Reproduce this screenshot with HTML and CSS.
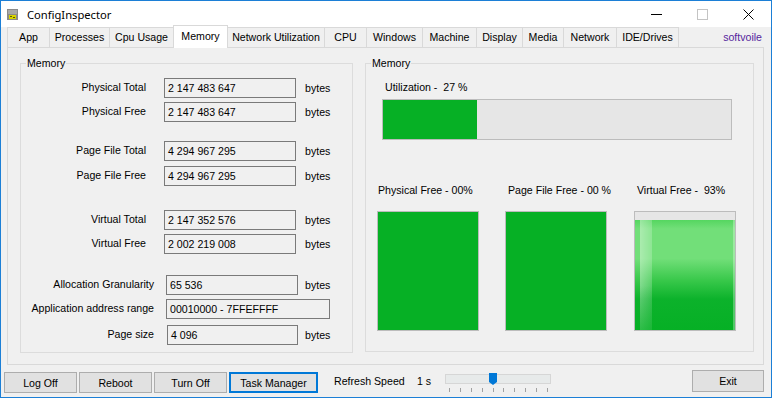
FILE: index.html
```html
<!DOCTYPE html>
<html lang="en">
<head>
    <meta charset="UTF-8">
    <title>ConfigInspector</title>
    <link rel="stylesheet" href="styles.css">
</head>
<body>
    <div class="window">
        <div class="titlebar">
            <svg class="app-icon" width="12" height="12" viewBox="0 0 12 12">
                <rect x="0" y="0" width="11" height="11" fill="#8a8a8a"/>
                <rect x="1" y="1" width="9" height="4" fill="#a8a8a8"/>
                <rect x="2" y="6" width="7" height="4" fill="#d8d400"/>
                <rect x="3" y="7" width="2" height="1" fill="#5a5a00"/>
                <rect x="6" y="8" width="2" height="1" fill="#5a5a00"/>
            </svg>
            <span class="title">ConfigInspector</span>
            <div class="controls">
                <span class="ctl"><svg width="11" height="11" viewBox="0 0 11 11"><line x1="0" y1="5.5" x2="11" y2="5.5" stroke="#000" stroke-width="1"/></svg></span>
                <span class="ctl"><svg width="11" height="11" viewBox="0 0 11 11"><rect x="0.5" y="0.5" width="10" height="10" fill="none" stroke="#c4c4c4" stroke-width="1"/></svg></span>
                <span class="ctl"><svg width="11" height="11" viewBox="0 0 11 11"><path d="M0.5 0.5 L10.5 10.5 M10.5 0.5 L0.5 10.5" stroke="#000" stroke-width="1"/></svg></span>
            </div>
        </div>

        <div class="tabstrip">
            <div class="tab" style="width:43px">App</div>
            <div class="tab" style="width:61px">Processes</div>
            <div class="tab" style="width:65px">Cpu Usage</div>
            <div class="tab selected" style="width:55px">Memory</div>
            <div class="tab" style="width:98px">Network Utilization</div>
            <div class="tab" style="width:43px">CPU</div>
            <div class="tab" style="width:57px">Windows</div>
            <div class="tab" style="width:55px">Machine</div>
            <div class="tab" style="width:47px">Display</div>
            <div class="tab" style="width:42px">Media</div>
            <div class="tab" style="width:54px">Network</div>
            <div class="tab" style="width:63px">IDE/Drives</div>
            <span class="brand">softvoile</span>
        </div>

        <div class="page">
            <fieldset class="group group-left">
                <legend>Memory</legend>

                <div class="row row-a" style="margin-top:8px">
                    <span class="label">Physical Total</span>
                    <span class="field">2 147 483 647</span>
                    <span class="unit">bytes</span>
                </div>
                <div class="row row-a" style="margin-top:4px">
                    <span class="label">Physical Free</span>
                    <span class="field">2 147 483 647</span>
                    <span class="unit">bytes</span>
                </div>

                <div class="row row-a" style="margin-top:19px">
                    <span class="label">Page File Total</span>
                    <span class="field">4 294 967 295</span>
                    <span class="unit">bytes</span>
                </div>
                <div class="row row-a" style="margin-top:5px">
                    <span class="label">Page File Free</span>
                    <span class="field">4 294 967 295</span>
                    <span class="unit">bytes</span>
                </div>

                <div class="row row-a" style="margin-top:24px">
                    <span class="label">Virtual Total</span>
                    <span class="field">2 147 352 576</span>
                    <span class="unit">bytes</span>
                </div>
                <div class="row row-a" style="margin-top:4px">
                    <span class="label">Virtual Free</span>
                    <span class="field">2 002 219 008</span>
                    <span class="unit">bytes</span>
                </div>

                <div class="row row-b" style="margin-top:21px">
                    <span class="label">Allocation Granularity</span>
                    <span class="field">65 536</span>
                    <span class="unit">bytes</span>
                </div>
                <div class="row row-b" style="margin-top:4px">
                    <span class="label">Application address range</span>
                    <span class="field field-wide">00010000 - 7FFEFFFF</span>
                </div>
                <div class="row row-b" style="margin-top:6px">
                    <span class="label">Page size</span>
                    <span class="field field-page">4 096</span>
                    <span class="unit">bytes</span>
                </div>
            </fieldset>

            <fieldset class="group group-right">
                <legend>Memory</legend>
                <div class="util-label">Utilization -&nbsp;&nbsp;27 %</div>
                <div class="hbar"><div class="hbar-fill" style="width:27%"></div></div>

                <div class="gauges">
                    <div class="gauge">
                        <div class="gauge-label">Physical Free -&nbsp;00%</div>
                        <div class="vbar"><div class="vbar-fill" style="height:100%"></div></div>
                    </div>
                    <div class="gauge">
                        <div class="gauge-label shift">Page File Free - 00 %</div>
                        <div class="vbar"><div class="vbar-fill" style="height:100%"></div></div>
                    </div>
                    <div class="gauge">
                        <div class="gauge-label shift">Virtual Free -&nbsp;&nbsp;93%</div>
                        <div class="vbar"><div class="vbar-fill glossy" style="height:93%"></div></div>
                    </div>
                </div>
            </fieldset>
        </div>

        <div class="bottombar">
            <button class="btn">Log Off</button>
            <button class="btn">Reboot</button>
            <button class="btn">Turn Off</button>
            <button class="btn btn-focus">Task Manager</button>
            <span class="refresh">Refresh Speed</span>
            <span class="speed">1 s</span>
            <div class="slider">
                <div class="track"></div>
                <div class="thumb"></div>
                <div class="ticks">
                    <i></i><i></i><i></i><i></i><i></i><i></i><i></i><i></i><i></i><i></i>
                </div>
            </div>
            <button class="btn btn-exit">Exit</button>
        </div>
    </div>
</body>
</html>
```

FILE: styles.css
```css
body {
    margin: 0;
    font-family: "Liberation Sans", Arial, sans-serif;
    font-size: 10.6px;
    color: #000;
}
.window {
    width: 772px;
    height: 398px;
    box-sizing: border-box;
    border: 1px solid #1c7fd6;
    background: #f0f0f0;
    display: flex;
    flex-direction: column;
}
.titlebar {
    height: 26px;
    background: #fff;
    display: flex;
    align-items: center;
}
.app-icon {
    margin-left: 6px;
    margin-top: 1px;
}
.title {
    margin-left: 8px;
    font-family: "Noto Sans", "Open Sans", sans-serif;
    font-size: 11.2px;
}
.controls {
    margin-left: auto;
    display: flex;
    height: 100%;
}
.ctl {
    width: 46px;
    display: flex;
    align-items: center;
    justify-content: center;
}

.tabstrip {
    height: 20px;
    display: flex;
    align-items: flex-start;
    padding-left: 6px;
}
.tab {
    box-sizing: border-box;
    height: 20px;
    margin-right: -1px;
    border: 1px solid #d9d9d9;
    border-bottom: none;
    background: #f0f0f0;
    text-align: center;
    line-height: 19px;
    white-space: nowrap;
}
.tab.selected {
    position: relative;
    z-index: 1;
    height: 23px;
    margin-top: -2px;
    background: #fff;
    line-height: 21px;
}
.brand {
    margin-left: auto;
    margin-right: 9px;
    line-height: 21px;
    color: #55269d;
}

.page {
    box-sizing: border-box;
    height: 318px;
    margin: 0 7px 0 6px;
    border: 1px solid #d9d9d9;
    display: flex;
    align-items: flex-start;
    padding: 9px 0 0 12px;
    gap: 12px;
}
.group {
    box-sizing: border-box;
    margin: 0;
    padding: 0;
    border: 1px solid #dcdcdc;
    min-width: 0;
}
.group legend {
    padding: 0 1px;
    margin-left: 5px;
    line-height: 13px;
}
.group-left {
    width: 333px;
    height: 296px;
}
.group-right {
    width: 389px;
    height: 295px;
}

.row {
    display: flex;
    align-items: center;
    height: 20px;
}
.label {
    text-align: right;
    white-space: nowrap;
    margin-top: -2px;
}
.row-a .label {
    width: 125px;
}
.row-a .field {
    margin-left: 18px;
}
.row-a .unit {
    margin-left: 9px;
}
.row-b .label {
    width: 133px;
}
.row-b .field {
    margin-left: 12px;
}
.row-b .unit {
    margin-left: 7px;
}
.field {
    box-sizing: border-box;
    width: 132px;
    height: 20px;
    border: 1px solid #7a7a7a;
    background: #f0f0f0;
    padding-left: 3px;
    line-height: 18px;
    white-space: nowrap;
}
.row-b .field-wide {
    width: 164px;
}
.row-b .field-page {
    width: 131px;
    margin-left: 13px;
}

.util-label {
    margin: 11px 0 0 19px;
    line-height: 13px;
}
.hbar {
    box-sizing: border-box;
    width: 350px;
    height: 41px;
    margin: 5px 0 0 16px;
    border: 1px solid #bcbcbc;
    background: #e6e6e6;
}
.hbar-fill {
    height: 100%;
    background: #06b025;
}
.gauges {
    display: grid;
    grid-template-columns: 128px 129px 102px;
    margin: 44px 0 0 11px;
}
.gauge-label {
    line-height: 13px;
    white-space: nowrap;
    padding-left: 1px;
}
.gauge-label.shift {
    padding-left: 3px;
}
.vbar {
    box-sizing: border-box;
    width: 102px;
    height: 120px;
    margin-top: 14px;
    border: 1px solid #bcbcbc;
    background: #e6e6e6;
    display: flex;
    flex-direction: column;
    justify-content: flex-end;
}
.vbar-fill {
    width: 100%;
    background: #06b025;
}
.vbar-fill.glossy {
    background:
        linear-gradient(to bottom, rgba(240,240,240,0) 0, rgba(240,240,240,0) 60%, rgba(6,176,37,0.6) 100%) 5px 0 / 12px 100% no-repeat,
        linear-gradient(to right, rgba(255,255,255,0.4), rgba(255,255,255,0.2)) 5px 0 / 12px 100% no-repeat,
        linear-gradient(to right, transparent 98px, rgba(255,255,255,0.3) 98px),
        linear-gradient(to bottom, #55d660 0, #72df79 8%, #72df79 35%, #38c84a 55%, #0cb22b 72%, #06b025 100%);
}

.bottombar {
    flex: 1;
    display: flex;
    align-items: flex-start;
    padding-left: 3px;
}
.btn {
    box-sizing: border-box;
    width: 73px;
    height: 21px;
    margin-top: 7px;
    margin-right: 2px;
    padding: 0;
    border: 1px solid #adadad;
    background: #e1e1e1;
    font-family: "Liberation Sans", Arial, sans-serif;
    font-size: 10.6px;
    color: #000;
}
.btn-focus {
    width: 89px;
    border: 2px solid #0078d7;
}
.refresh {
    width: 83px;
    margin-left: 14px;
    margin-top: 10px;
    line-height: 13px;
    white-space: nowrap;
}
.speed {
    width: 28px;
    margin-top: 10px;
    line-height: 13px;
}
.slider {
    position: relative;
    width: 106px;
    margin-top: 9px;
}
.track {
    box-sizing: border-box;
    height: 10px;
    border: 1px solid #d6d6d6;
    background: #e7eaea;
}
.thumb {
    position: absolute;
    left: 44px;
    top: -1px;
    width: 8px;
    height: 12px;
    background: #0078d7;
    clip-path: polygon(0 0, 100% 0, 100% 75%, 50% 100%, 0 75%);
}
.ticks {
    display: flex;
    justify-content: space-between;
    width: 99px;
    margin: 4px 0 0 4px;
}
.ticks i {
    width: 1px;
    height: 4px;
    background: #a0a0a0;
}
.btn-exit {
    width: 72px;
    height: 22px;
    margin: 5px 7px 0 auto;
}
```
